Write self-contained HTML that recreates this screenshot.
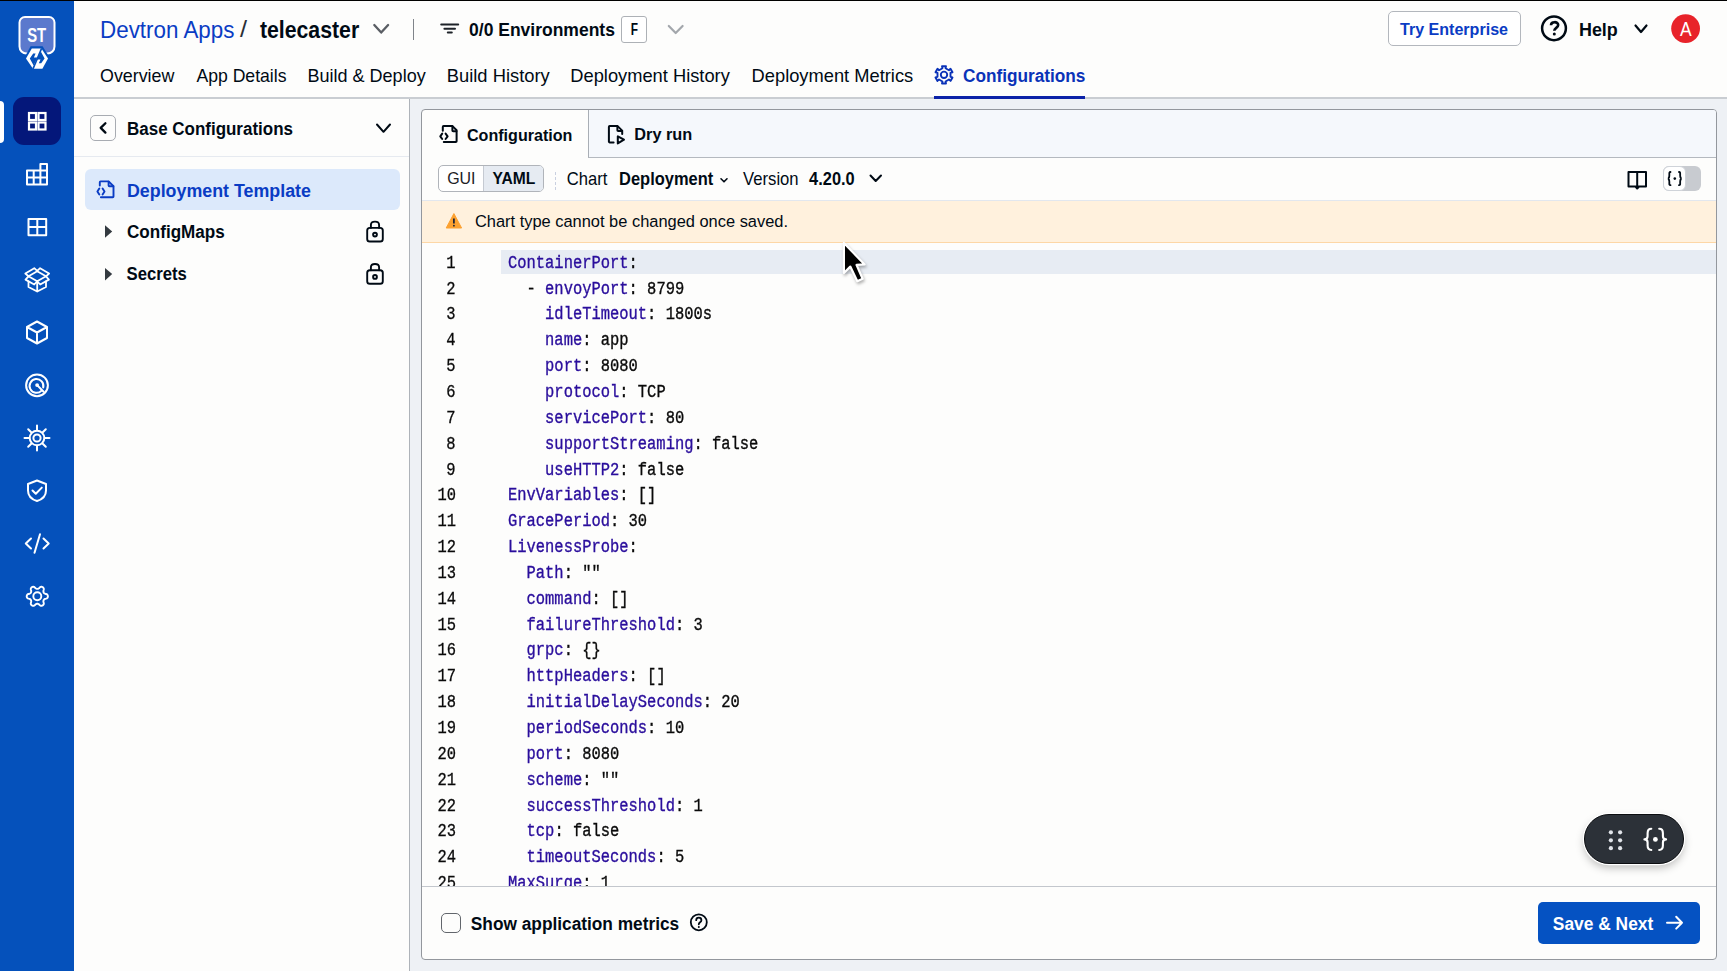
<!DOCTYPE html>
<html><head><meta charset="utf-8">
<style>
*{box-sizing:border-box;margin:0;padding:0}
html,body{width:1727px;height:971px;overflow:hidden;background:#fdfdfc;font-family:"Liberation Sans",sans-serif}
.a{position:absolute}
.t{position:absolute;white-space:nowrap;font-family:"Liberation Sans",sans-serif}
svg{position:absolute;overflow:visible}
#code{position:absolute;left:422px;top:243px;width:1294px;height:643px;overflow:hidden}
.cl{position:absolute;left:86.2px;white-space:pre;font-family:"Liberation Mono",monospace;font-size:17.6px;line-height:17.6px;color:#0a0a0a;transform:scaleX(0.8783);transform-origin:0 0;-webkit-text-stroke:0.35px currentColor}
.cl i{font-style:normal;color:#2a0e9c}
.ln{position:absolute;right:1260px;white-space:pre;font-family:"Liberation Mono",monospace;font-size:17.6px;line-height:17.6px;color:#0a0a0a;transform:scaleX(0.8783);transform-origin:100% 0;text-align:right;-webkit-text-stroke:0.3px currentColor}
</style></head><body>
<!-- top black line -->
<div class="a" style="left:0;top:0;width:1727px;height:1px;background:#000"></div>
<!-- sidebar -->
<div class="a" style="left:0;top:1px;width:74px;height:970px;background:#0551bb"></div>
<!-- ST logo -->
<svg style="left:0;top:0" width="74" height="80">
  <path d="M25,17 H49 A5.5,5.5 0 0 1 54.5,22.5 V46.5 A7,7 0 0 1 47.5,53.5 H26.5 A7,7 0 0 1 19.5,46.5 V22.5 A5.5,5.5 0 0 1 25,17 Z" fill="#5b79cd" stroke="#fff" stroke-width="2"/>
  <text x="27.2" y="42.2" textLength="19" lengthAdjust="spacingAndGlyphs" font-family="Liberation Sans" font-weight="700" font-size="20" fill="#fff">ST</text>
  <polygon points="30.6,46.2 42.6,46.2 50.3,58.6 43.6,71 32,71 24,58.6" fill="#0551bb"/>
  <polygon points="31.8,48.6 41.4,48.6 48,58.6 42.4,68.7 33,68.7 26,58.6" fill="#fff"/>
  <path d="M29.8,58.6 L33.2,53.6 L35.6,53.6 L33.9,57.6 L37.4,57.6 L33.6,65.4 Z" fill="#0551bb"/>
  <path d="M44.6,58.6 L41.2,63.2 L38.8,63.2 L40.5,59.6 L37,59.6 L40.8,51.6 Z" fill="#0551bb"/>
  <path d="M41.6,48.4 L33,68.9" stroke="#0551bb" stroke-width="1.6"/>
</svg>
<!-- active item -->
<div class="a" style="left:0;top:100.5px;width:4px;height:42px;background:#fff;border-radius:0 4px 4px 0"></div>
<div class="a" style="left:13px;top:97px;width:48px;height:47.5px;background:#04177a;border-radius:11px"></div>
<svg style="left:0;top:0" width="74" height="150">
  <g fill="none" stroke="#fff" stroke-width="2.2">
    <rect x="29" y="113" width="7" height="7"/><rect x="38.5" y="113" width="7" height="7"/>
    <rect x="29" y="122.5" width="7" height="7"/><rect x="38.5" y="122.5" width="7" height="7"/>
  </g>
</svg>
<!-- sidebar icons -->
<svg style="left:0;top:150px" width="74" height="470">
 <g fill="none" stroke="#fff" stroke-width="2" stroke-linejoin="round" stroke-linecap="round">
  <!-- 1 bars grid: 26.3..48 x 13.3..35.1 -->
  <path d="M27,20.5 H47 V34.5 H27 Z M27,27.5 H47 M33.7,20.5 V34.5 M40.4,20.5 V34.5 M40.4,20.5 V14 H47 V20.5"/>
  <!-- 2 window grid: 27.6..47.1 x 68..86 -->
  <path d="M28.5,69 H46.2 V85.2 H28.5 Z M37.3,69 V85.2 M28.5,77.1 H46.2"/>
  <!-- 3 open box -->
  <g stroke-width="1.8">
  <path d="M28.5,126.3 L25.3,123.5 L34.3,118.2 L37.2,120.8 L40.1,118.2 L49.1,123.5 L46,126.3"/>
  <path d="M28.5,126.3 L37.2,121.3 L46,126.3 L37.2,131.3 Z"/>
  <path d="M28.5,126.3 L25.5,129.6 L34.2,134.5 L37.2,131.3 L40.2,134.5 L48.9,129.6 L46,126.3"/>
  <path d="M28.5,131.5 V137 L37.2,141.5 L46,137 V131.5 M37.2,131.3 V141.5"/>
  </g>
  <!-- 4 cube: 26.1..47.9 x 170.5..194.2 -->
  <path d="M37,171.5 L47,177 V188 L37,193.5 L27,188 V177 Z M27,177 L37,182.5 L47,177 M37,182.5 V193.5"/>
  <!-- 5 radar: center 37,235.3 -->
  <circle cx="37" cy="235.3" r="10.9"/>
  <path d="M41.6,240.6 A6.9,6.9 0 1 1 43.2,237.6"/>
  <circle cx="37.1" cy="235.1" r="1.9" fill="#fff" stroke="none"/>
  <path d="M37.1,235.1 L43.6,241.8"/>
  <!-- 6 helm: center 37,288 -->
  <circle cx="37" cy="288" r="7.3"/>
  <circle cx="37" cy="288" r="3.6"/>
  <path d="M37,275.5 V280.2 M37,295.8 V300.5 M24.5,288 H29.2 M44.8,288 H49.5 M28.2,279.2 L31.5,282.5 M42.5,293.5 L45.8,296.8 M45.8,279.2 L42.5,282.5 M31.5,293.5 L28.2,296.8"/>
  <!-- 7 shield: 26.7..46.9 x 329.7..351.3 -->
  <path d="M37,330.5 L46,334 V340.5 C46,346 42,349.5 37,351 C32,349.5 28,346 28,340.5 V334 Z"/>
  <path d="M32.5,340.5 L35.8,343.8 L41.8,337.6"/>
  <!-- 8 code: 24.8..49.8 x 383.4..403.6 -->
  <path d="M31,388.5 L25.8,393.5 L31,398.5 M43.5,388.5 L48.7,393.5 L43.5,398.5 M40,384.3 L34.5,402.7"/>
  <!-- 9 gear -->
  <g transform="translate(37.3,446.3)" stroke-width="1.9"><path d="M10.60,0.00 L10.54,0.55 L10.35,1.09 L10.04,1.59 L9.58,2.04 L8.69,2.33 L7.81,2.54 L7.32,2.81 L6.93,3.09 L6.64,3.38 L6.41,3.70 L6.25,4.06 L6.14,4.46 L6.09,4.93 L6.10,5.49 L6.36,6.36 L6.55,7.28 L6.40,7.90 L6.12,8.42 L5.75,8.85 L5.30,9.18 L4.79,9.40 L4.23,9.51 L3.64,9.49 L3.03,9.31 L2.33,8.69 L1.71,8.03 L1.23,7.74 L0.79,7.55 L0.39,7.44 L0.00,7.40 L-0.39,7.44 L-0.79,7.55 L-1.23,7.74 L-1.71,8.03 L-2.33,8.69 L-3.03,9.31 L-3.64,9.49 L-4.23,9.51 L-4.79,9.40 L-5.30,9.18 L-5.75,8.85 L-6.12,8.42 L-6.40,7.90 L-6.55,7.28 L-6.36,6.36 L-6.10,5.49 L-6.09,4.93 L-6.14,4.46 L-6.25,4.06 L-6.41,3.70 L-6.64,3.38 L-6.93,3.09 L-7.32,2.81 L-7.81,2.54 L-8.69,2.33 L-9.58,2.04 L-10.04,1.59 L-10.35,1.09 L-10.54,0.55 L-10.60,0.00 L-10.54,-0.55 L-10.35,-1.09 L-10.04,-1.59 L-9.58,-2.04 L-8.69,-2.33 L-7.81,-2.54 L-7.32,-2.81 L-6.93,-3.09 L-6.64,-3.38 L-6.41,-3.70 L-6.25,-4.06 L-6.14,-4.46 L-6.09,-4.93 L-6.10,-5.49 L-6.36,-6.36 L-6.55,-7.28 L-6.40,-7.90 L-6.12,-8.42 L-5.75,-8.85 L-5.30,-9.18 L-4.79,-9.40 L-4.23,-9.51 L-3.64,-9.49 L-3.03,-9.31 L-2.33,-8.69 L-1.71,-8.03 L-1.23,-7.74 L-0.79,-7.55 L-0.39,-7.44 L-0.00,-7.40 L0.39,-7.44 L0.79,-7.55 L1.23,-7.74 L1.71,-8.03 L2.33,-8.69 L3.03,-9.31 L3.64,-9.49 L4.23,-9.51 L4.79,-9.40 L5.30,-9.18 L5.75,-8.85 L6.12,-8.42 L6.40,-7.90 L6.55,-7.28 L6.36,-6.36 L6.10,-5.49 L6.09,-4.93 L6.14,-4.46 L6.25,-4.06 L6.41,-3.70 L6.64,-3.38 L6.93,-3.09 L7.32,-2.81 L7.81,-2.54 L8.69,-2.33 L9.58,-2.04 L10.04,-1.59 L10.35,-1.09 L10.54,-0.55 Z"/><circle cx="0" cy="0" r="4"/></g>
 </g>
</svg>

<!-- header -->
<div class="a" style="left:74px;top:97px;width:1653px;height:2px;background:#c9cdd2"></div>
<div class="a" style="left:934px;top:96px;width:151px;height:3px;background:#0b22a8"></div>
<div class="a" style="left:413.2px;top:18.5px;width:1px;height:21px;background:#80848a"></div>
<div class="a" style="left:1388px;top:11px;width:133px;height:35px;border:1.5px solid #b3b7bd;border-radius:5px;background:#fff"></div>
<div class="a" style="left:621.2px;top:15.6px;width:25.8px;height:27.4px;border:1.5px solid #adb1b6;border-radius:3px;background:#fff"></div>
<svg style="left:0;top:0" width="1727" height="100">
 <g fill="none" stroke-linecap="round" stroke-linejoin="round">
  <path d="M374.3,25 L381.2,32.6 L388.1,25" stroke="#5a5e64" stroke-width="2.3"/>
  <path d="M441.2,24.4 H458.2 M444.4,28.8 H455 M447.8,32.6 H451.8" stroke="#1d2228" stroke-width="2"/>
  <path d="M668.8,26 L675.7,33 L682.6,26" stroke="#a3a7ac" stroke-width="2.2"/>
  <circle cx="1554" cy="28.3" r="11.9" stroke="#000a14" stroke-width="2.5"/>
  <path d="M1551,25.2 C1551,21.2 1558.2,21.2 1558.2,25 C1558.2,27.8 1554.3,28 1554.3,30.8" stroke="#000a14" stroke-width="2.6" stroke-linecap="butt"/>
  <circle cx="1554.3" cy="33.9" r="1.5" fill="#000a14" stroke="none"/>
  <path d="M1635.5,25.5 L1641,32 L1646.5,25.5" stroke="#000a14" stroke-width="2.2"/>
  <!-- gear in tab -->
  <g transform="translate(944,74.85)" stroke="#0a32b8" stroke-width="1.9">
   <path d="M2.00,-8.67 L-2.00,-8.67 L-1.53,-6.63 L-4.97,-4.64 L-6.51,-6.07 L-8.51,-2.60 L-6.50,-1.99 L-6.50,1.99 L-8.51,2.60 L-6.51,6.07 L-4.97,4.64 L-1.53,6.63 L-2.00,8.67 L2.00,8.67 L1.53,6.63 L4.97,4.64 L6.51,6.07 L8.51,2.60 L6.50,1.99 L6.50,-1.99 L8.51,-2.60 L6.51,-6.07 L4.97,-4.64 L1.53,-6.63 Z"/>
   <circle cx="0" cy="0" r="3.2"/>
  </g>
 </g>
 <circle cx="1685.6" cy="28.6" r="14.4" fill="#e8232a"/>
</svg>

<!-- left panel -->
<div class="a" style="left:408.6px;top:99px;width:1.4px;height:872px;background:#aeb3b9"></div>
<div class="a" style="left:74px;top:156.3px;width:334.5px;height:1.2px;background:#e6eaf0"></div>
<div class="a" style="left:90px;top:114.5px;width:26px;height:26px;border:1.3px solid #a8acb2;border-radius:5px"></div>
<div class="a" style="left:85px;top:168.7px;width:315px;height:41.3px;background:#dce9fb;border-radius:6px"></div>
<svg style="left:0;top:0" width="420" height="300">
 <g fill="none" stroke-linecap="round" stroke-linejoin="round">
  <path d="M105.4,123.2 L100.7,127.9 L105.4,132.6" stroke="#000a14" stroke-width="2.3"/>
  <path d="M377,124.5 L383.5,131.8 L390,124.5" stroke="#000a14" stroke-width="2"/>
  <!-- doc code icon blue -->
  <g stroke="#0a3cc4" stroke-width="1.9">
   <path d="M99.8,185.6 V182.2 A0.8,0.8 0 0 1 100.6,181.4 H108.6 L113.5,186.2 V196.5 A0.8,0.8 0 0 1 112.7,197.3 H100.9"/>
   <path d="M108.6,181.6 V185.4 A0.8,0.8 0 0 0 109.4,186.2 H113.3"/>
   <path d="M99.3,188.6 L97.4,191.5 L99.3,194.4 M102.6,188.6 L104.5,191.5 L102.6,194.4"/>
  </g>
  <!-- locks -->
  <g stroke="#000a14" stroke-width="1.9">
   <rect x="367.2" y="227.9" width="15.6" height="13.6" rx="2.6"/>
   <path d="M370.9,227.9 V225 C370.9,220.5 379.1,220.5 379.1,225 V227.9"/>
   <circle cx="375" cy="234.6" r="1.9"/>
   <rect x="367.2" y="270.2" width="15.6" height="13.6" rx="2.6"/>
   <path d="M370.9,270.2 V267.3 C370.9,262.8 379.1,262.8 379.1,267.3 V270.2"/>
   <circle cx="375" cy="276.9" r="1.9"/>
  </g>
 </g>
 <path d="M105,225.3 L112.2,231.5 L105,237.8 Z" fill="#343a40"/>
 <path d="M105,267.9 L112.2,274.1 L105,280.4 Z" fill="#343a40"/>
</svg>

<!-- main bg -->
<div class="a" style="left:410px;top:99px;width:1317px;height:872px;background:#eef1f5"></div>
<!-- card -->
<div class="a" style="left:421px;top:109px;width:1296px;height:851px;background:#fdfdfc;border:1.3px solid #93979d;border-radius:4px;overflow:hidden">
  <div class="a" style="left:165.8px;top:0;width:1130px;height:48px;background:#f5f8fc;border-left:1.3px solid #a9aeb5;border-bottom:1.3px solid #b4b9bf"></div>
  <div class="a" style="left:0;top:89.5px;width:1296px;height:43px;background:#fff1dd;border-top:1px solid #e2e7ee;border-bottom:1.5px solid #fdd7a6"></div>
  <div class="a" style="left:78.5px;top:139.5px;width:1220px;height:24px;background:#e7ecf3"></div>
  <div class="a" style="left:0;top:775.5px;width:1296px;height:1.5px;background:#c3c7cd"></div>
</div>
<!-- segmented -->
<div class="a" style="left:438px;top:165.4px;width:106px;height:26.2px;border:1.3px solid #b0b4ba;border-radius:5px;background:#fff;overflow:hidden">
  <div class="a" style="left:44.3px;top:0;width:62px;height:26px;background:#e6ebf2;border-left:1.2px solid #c5cad2"></div>
</div>
<div class="a" style="left:555px;top:172px;width:0;height:18px;border-left:1px dashed #c9d0e0"></div>

<!-- toolbar / tab icons -->
<svg style="left:0;top:0" width="1727" height="300">
 <g fill="none" stroke-linecap="round" stroke-linejoin="round" stroke="#000a14" stroke-width="2">
  <!-- configuration doc icon -->
  <path d="M442.8,130.8 V126.9 A0.8,0.8 0 0 1 443.6,126.1 H452.5 L456.6,130.2 V141.2 A0.8,0.8 0 0 1 455.8,142 H443.8"/>
  <path d="M452.4,126.3 V130.4 A0.8,0.8 0 0 0 453.2,131.2 H456.4"/>
  <path d="M442.2,133.6 L440.3,136.3 L442.2,139 M445.6,133.6 L447.6,136.3 L445.6,139"/>
  <!-- dry run icon -->
  <path d="M613.6,142.4 H609.7 A0.8,0.8 0 0 1 608.9,141.6 V126.9 A0.8,0.8 0 0 1 609.7,126.1 H617.6 L622.2,130.6 V133.9"/>
  <path d="M617.4,126.3 V130.3 A0.8,0.8 0 0 0 618.2,131.1 H622"/>
  <path d="M617.8,136.4 V143.4 L624,139.7 Z"/>
  <!-- chevrons -->
  <path d="M721,178.8 L724,181.8 L727,178.8" stroke-width="1.6"/>
  <path d="M870.5,175.5 L875.7,181 L881,175.5" stroke-width="2"/>
  <!-- book -->
  <path d="M1628.5,172 H1637.2 V186.5 H1628.5 Z M1637.2,172 H1646 V186.5 H1637.2 M1635.5,186.5 L1637.2,188.5 L1639,186.5"/>
  <!-- help small -->
  <circle cx="698.8" cy="922.3" r="8" stroke-width="1.8"/>
  <path d="M696.2,920.2 C696.2,916.8 701.4,916.8 701.4,920.2 C701.4,922.3 698.8,922.3 698.8,924.3" stroke-width="1.8"/>
 </g>
 <circle cx="698.8" cy="927" r="1" fill="#000a14"/>
</svg>
<!-- toggle -->
<div class="a" style="left:1663px;top:166px;width:37.5px;height:24.5px;background:#c8cbd0;border-radius:6px"></div>
<div class="a" style="left:1663px;top:166px;width:23px;height:24.5px;background:#fff;border:1px solid #cfd3d9;border-radius:6px"></div>
<svg style="left:0;top:0" width="1727" height="300">
 <g fill="none" stroke="#000a14" stroke-width="1.8" stroke-linecap="round">
  <path d="M1670.5,172 C1668.8,172 1669.5,173.5 1669.3,176 C1669.2,178 1668,178.6 1667.8,178.6 C1668,178.6 1669.2,179.2 1669.3,181.2 C1669.5,183.7 1668.8,185.2 1670.5,185.2"/>
  <path d="M1679,172 C1680.7,172 1680,173.5 1680.2,176 C1680.3,178 1681.5,178.6 1681.7,178.6 C1681.5,178.6 1680.3,179.2 1680.2,181.2 C1680,183.7 1680.7,185.2 1679,185.2"/>
 </g>
 <circle cx="1674.8" cy="178.6" r="1.3" fill="#000a14"/>
 <!-- warning -->
 <path d="M453.9,213.6 L461.6,228 H446.2 Z" fill="#fca130" stroke="#fca130" stroke-width="1" stroke-linejoin="round"/>
 <path d="M453.9,218.4 V223.6" stroke="#14203a" stroke-width="1.7"/>
 <circle cx="453.9" cy="225.7" r="0.9" fill="#14203a"/>
</svg>

<!-- code -->
<div id="code">
<div class="ln" style="top:11.70px">1</div>
<div class="ln" style="top:37.55px">2</div>
<div class="ln" style="top:63.40px">3</div>
<div class="ln" style="top:89.25px">4</div>
<div class="ln" style="top:115.10px">5</div>
<div class="ln" style="top:140.95px">6</div>
<div class="ln" style="top:166.80px">7</div>
<div class="ln" style="top:192.65px">8</div>
<div class="ln" style="top:218.50px">9</div>
<div class="ln" style="top:244.35px">10</div>
<div class="ln" style="top:270.20px">11</div>
<div class="ln" style="top:296.05px">12</div>
<div class="ln" style="top:321.90px">13</div>
<div class="ln" style="top:347.75px">14</div>
<div class="ln" style="top:373.60px">15</div>
<div class="ln" style="top:399.45px">16</div>
<div class="ln" style="top:425.30px">17</div>
<div class="ln" style="top:451.15px">18</div>
<div class="ln" style="top:477.00px">19</div>
<div class="ln" style="top:502.85px">20</div>
<div class="ln" style="top:528.70px">21</div>
<div class="ln" style="top:554.55px">22</div>
<div class="ln" style="top:580.40px">23</div>
<div class="ln" style="top:606.25px">24</div>
<div class="ln" style="top:632.10px">25</div>
<div class="cl" style="top:11.70px"><i>ContainerPort</i>:</div>
<div class="cl" style="top:37.55px">&nbsp;&nbsp;-&nbsp;<i>envoyPort</i>:&nbsp;8799</div>
<div class="cl" style="top:63.40px">&nbsp;&nbsp;&nbsp;&nbsp;<i>idleTimeout</i>:&nbsp;1800s</div>
<div class="cl" style="top:89.25px">&nbsp;&nbsp;&nbsp;&nbsp;<i>name</i>:&nbsp;app</div>
<div class="cl" style="top:115.10px">&nbsp;&nbsp;&nbsp;&nbsp;<i>port</i>:&nbsp;8080</div>
<div class="cl" style="top:140.95px">&nbsp;&nbsp;&nbsp;&nbsp;<i>protocol</i>:&nbsp;TCP</div>
<div class="cl" style="top:166.80px">&nbsp;&nbsp;&nbsp;&nbsp;<i>servicePort</i>:&nbsp;80</div>
<div class="cl" style="top:192.65px">&nbsp;&nbsp;&nbsp;&nbsp;<i>supportStreaming</i>:&nbsp;false</div>
<div class="cl" style="top:218.50px">&nbsp;&nbsp;&nbsp;&nbsp;<i>useHTTP2</i>:&nbsp;false</div>
<div class="cl" style="top:244.35px"><i>EnvVariables</i>:&nbsp;[]</div>
<div class="cl" style="top:270.20px"><i>GracePeriod</i>:&nbsp;30</div>
<div class="cl" style="top:296.05px"><i>LivenessProbe</i>:</div>
<div class="cl" style="top:321.90px">&nbsp;&nbsp;<i>Path</i>:&nbsp;&quot;&quot;</div>
<div class="cl" style="top:347.75px">&nbsp;&nbsp;<i>command</i>:&nbsp;[]</div>
<div class="cl" style="top:373.60px">&nbsp;&nbsp;<i>failureThreshold</i>:&nbsp;3</div>
<div class="cl" style="top:399.45px">&nbsp;&nbsp;<i>grpc</i>:&nbsp;{}</div>
<div class="cl" style="top:425.30px">&nbsp;&nbsp;<i>httpHeaders</i>:&nbsp;[]</div>
<div class="cl" style="top:451.15px">&nbsp;&nbsp;<i>initialDelaySeconds</i>:&nbsp;20</div>
<div class="cl" style="top:477.00px">&nbsp;&nbsp;<i>periodSeconds</i>:&nbsp;10</div>
<div class="cl" style="top:502.85px">&nbsp;&nbsp;<i>port</i>:&nbsp;8080</div>
<div class="cl" style="top:528.70px">&nbsp;&nbsp;<i>scheme</i>:&nbsp;&quot;&quot;</div>
<div class="cl" style="top:554.55px">&nbsp;&nbsp;<i>successThreshold</i>:&nbsp;1</div>
<div class="cl" style="top:580.40px">&nbsp;&nbsp;<i>tcp</i>:&nbsp;false</div>
<div class="cl" style="top:606.25px">&nbsp;&nbsp;<i>timeoutSeconds</i>:&nbsp;5</div>
<div class="cl" style="top:632.10px"><i>MaxSurge</i>:&nbsp;1</div>
</div>

<!-- footer -->
<div class="a" style="left:441.2px;top:913px;width:19.8px;height:19.5px;border:1.7px solid #62666c;border-radius:5px"></div>
<div class="a" style="left:1538px;top:902px;width:162px;height:42px;background:#0552c2;border-radius:5px"></div>
<svg style="left:0;top:0" width="1727" height="971">
 <path d="M1667,922.7 H1682 M1676.2,916.8 L1682,922.7 L1676.2,928.6" fill="none" stroke="#fff" stroke-width="2" stroke-linecap="round" stroke-linejoin="round"/>
</svg>
<!-- floating pill -->
<div class="a" style="left:1583.6px;top:814px;width:100.6px;height:50px;background:#2c3138;border-radius:25px;border:1.2px solid #0b0d10;box-shadow:0 0 0 1.2px #fff,0 4px 8px rgba(0,0,0,0.25)"></div>
<svg style="left:0;top:0" width="1727" height="971">
 <g fill="#e2e5ea">
  <circle cx="1610.9" cy="832.3" r="2.1"/><circle cx="1620.1" cy="832.3" r="2.1"/>
  <circle cx="1610.9" cy="840.3" r="2.1"/><circle cx="1620.1" cy="840.3" r="2.1"/>
  <circle cx="1610.9" cy="848.2" r="2.1"/><circle cx="1620.1" cy="848.2" r="2.1"/>
 </g>
 <g fill="none" stroke="#fff" stroke-width="2.1" stroke-linecap="round" stroke-linejoin="round">
  <path d="M1651.3,828.8 C1648.6,828.8 1647.6,830.5 1647.6,833.2 V836.3 C1647.6,838.2 1646.4,839.4 1644.4,839.4 C1646.4,839.4 1647.6,840.6 1647.6,842.5 V845.6 C1647.6,848.3 1648.6,850 1651.3,850"/>
  <path d="M1659.2,828.8 C1661.9,828.8 1662.9,830.5 1662.9,833.2 V836.3 C1662.9,838.2 1664.1,839.4 1666.1,839.4 C1664.1,839.4 1662.9,840.6 1662.9,842.5 V845.6 C1662.9,848.3 1661.9,850 1659.2,850"/>
 </g>
 <circle cx="1655.4" cy="839.4" r="2.4" fill="#fff"/>
</svg>

<svg style="left:0;top:0" width="1727" height="971" font-family="Liberation Sans"><text x="100.03" y="37.7" font-size="23.7" font-weight="400" fill="#0a3cc4" textLength="134.45" lengthAdjust="spacingAndGlyphs">Devtron Apps</text>
<text x="240.00" y="37.4" font-size="23.7" font-weight="400" fill="#2a2f36" textLength="7.05" lengthAdjust="spacingAndGlyphs">/</text>
<text x="259.90" y="37.7" font-size="23.3" font-weight="700" fill="#000a14" textLength="99.31" lengthAdjust="spacingAndGlyphs">telecaster</text>
<text x="469.05" y="35.5" font-size="18.4" font-weight="700" fill="#000a14" textLength="145.84" lengthAdjust="spacingAndGlyphs">0/0 Environments</text>
<text x="630.79" y="34.7" font-size="16.7" font-weight="700" fill="#000a14" textLength="7.25" lengthAdjust="spacingAndGlyphs">F</text>
<text x="1400.00" y="35.0" font-size="17.1" font-weight="700" fill="#0a3cc4" textLength="108.00" lengthAdjust="spacingAndGlyphs">Try Enterprise</text>
<text x="1578.96" y="35.5" font-size="19.0" font-weight="700" fill="#000a14" textLength="38.85" lengthAdjust="spacingAndGlyphs">Help</text>
<text x="1680.00" y="35.7" font-size="19.6" font-weight="400" fill="#ffffff" textLength="11.66" lengthAdjust="spacingAndGlyphs">A</text>
<text x="100.01" y="81.6" font-size="18.1" font-weight="400" fill="#000a14" textLength="74.39" lengthAdjust="spacingAndGlyphs">Overview</text>
<text x="196.40" y="81.6" font-size="18.1" font-weight="400" fill="#000a14" textLength="90.11" lengthAdjust="spacingAndGlyphs">App Details</text>
<text x="307.50" y="81.6" font-size="18.1" font-weight="400" fill="#000a14" textLength="118.18" lengthAdjust="spacingAndGlyphs">Build &amp; Deploy</text>
<text x="446.79" y="81.6" font-size="18.1" font-weight="400" fill="#000a14" textLength="102.98" lengthAdjust="spacingAndGlyphs">Build History</text>
<text x="570.29" y="81.6" font-size="18.1" font-weight="400" fill="#000a14" textLength="159.58" lengthAdjust="spacingAndGlyphs">Deployment History</text>
<text x="751.59" y="81.6" font-size="18.1" font-weight="400" fill="#000a14" textLength="161.60" lengthAdjust="spacingAndGlyphs">Deployment Metrics</text>
<text x="962.96" y="81.6" font-size="18.3" font-weight="700" fill="#0a32b8" textLength="122.47" lengthAdjust="spacingAndGlyphs">Configurations</text>
<text x="127.02" y="134.6" font-size="19.2" font-weight="700" fill="#000a14" textLength="165.94" lengthAdjust="spacingAndGlyphs">Base Configurations</text>
<text x="126.97" y="196.5" font-size="19.1" font-weight="700" fill="#0a3cc4" textLength="183.96" lengthAdjust="spacingAndGlyphs">Deployment Template</text>
<text x="126.99" y="238.4" font-size="18.7" font-weight="700" fill="#000a14" textLength="97.76" lengthAdjust="spacingAndGlyphs">ConfigMaps</text>
<text x="126.51" y="280.4" font-size="18.7" font-weight="700" fill="#000a14" textLength="60.37" lengthAdjust="spacingAndGlyphs">Secrets</text>
<text x="466.94" y="140.5" font-size="16.8" font-weight="700" fill="#000a14" textLength="105.51" lengthAdjust="spacingAndGlyphs">Configuration</text>
<text x="634.27" y="140.4" font-size="16.6" font-weight="700" fill="#000a14" textLength="57.97" lengthAdjust="spacingAndGlyphs">Dry run</text>
<text x="447.13" y="184.0" font-size="16.5" font-weight="400" fill="#1d2126" textLength="28.36" lengthAdjust="spacingAndGlyphs">GUI</text>
<text x="492.40" y="183.8" font-size="16.5" font-weight="700" fill="#000a14" textLength="42.82" lengthAdjust="spacingAndGlyphs">YAML</text>
<text x="566.86" y="184.6" font-size="17.7" font-weight="400" fill="#000a14" textLength="40.57" lengthAdjust="spacingAndGlyphs">Chart</text>
<text x="619.07" y="184.6" font-size="17.7" font-weight="700" fill="#000a14" textLength="94.14" lengthAdjust="spacingAndGlyphs">Deployment</text>
<text x="743.10" y="184.5" font-size="17.7" font-weight="400" fill="#000a14" textLength="55.54" lengthAdjust="spacingAndGlyphs">Version</text>
<text x="809.10" y="184.5" font-size="17.7" font-weight="700" fill="#000a14" textLength="45.59" lengthAdjust="spacingAndGlyphs">4.20.0</text>
<text x="474.94" y="227.1" font-size="17.1" font-weight="400" fill="#000a14" textLength="313.08" lengthAdjust="spacingAndGlyphs">Chart type cannot be changed once saved.</text>
<text x="470.85" y="929.5" font-size="18.3" font-weight="700" fill="#000a14" textLength="208.36" lengthAdjust="spacingAndGlyphs">Show application metrics</text>
<text x="1552.85" y="929.5" font-size="18.3" font-weight="700" fill="#ffffff" textLength="100.40" lengthAdjust="spacingAndGlyphs">Save &amp; Next</text></svg>

<!-- cursor -->
<svg style="left:0;top:0" width="1727" height="971">
 <path d="M843.9,243 L843.9,273 L850.3,266.6 L857.3,281.2 L862.6,278.8 L856.5,264.9 L864.6,264.4 Z" fill="#000" stroke="#fff" stroke-width="2.2" stroke-linejoin="round" style="filter:drop-shadow(1px 2px 1.5px rgba(0,0,0,0.3))"/>
</svg>
</body></html>
